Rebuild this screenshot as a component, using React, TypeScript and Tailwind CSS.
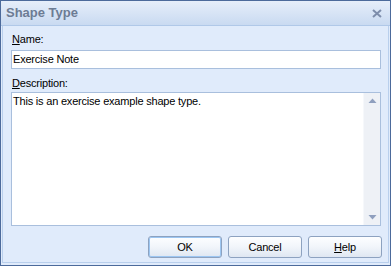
import React from 'react';

const ui = { fontFamily: '"Liberation Sans", Arial, sans-serif' };

function Btn({ children, focused }: { children: React.ReactNode; focused?: boolean }) {
  return (
    <button
      className={
        'w-[74px] h-[22px] rounded-[3px] border border-[#8da2c0] bg-gradient-to-b from-[#fdfeff] via-[#f1f5fa] to-[#dfe7f2] text-[11px] tracking-[-0.2px] text-black flex items-center justify-center ' +
        (focused ? 'shadow-[inset_0_0_0_1px_#9cc6f2]' : '')
      }
    >
      {children}
    </button>
  );
}

export default function App() {
  return (
    <div className="w-[391px] h-[266px] border border-[#4c6a9b] bg-[#e0ebfb] flex flex-col" style={ui}>
      <div className="h-[25px] shrink-0 flex items-center justify-between pl-[5px] pr-[8px] bg-gradient-to-b from-[#e6eefa] to-[#c9daf1] border-b border-[#b0c8e8]">
        <span className="text-[13px] font-bold text-[#6d7c94]">Shape Type</span>
        <svg width="10" height="9" viewBox="0 0 10 9" className="mt-[1px]">
          <path d="M1 1 L9 8 M9 1 L1 8" stroke="#7d8dab" strokeWidth="2" />
        </svg>
      </div>
      <div className="flex-1 flex flex-col pl-[8px] pr-[7px] pt-[7px] border-x border-b border-[#b9cfec] mx-px mb-[2px] text-[11px] tracking-[-0.2px] text-black">
        <div className="h-[13px] leading-[13px] pl-px">
          <span className="underline underline-offset-1">N</span>ame:
        </div>
        <div className="mt-[4px] h-[19px] bg-white border border-[#a9bfdd] flex items-center pl-px">
          Exercise Note
        </div>
        <div className="mt-[8px] h-[13px] leading-[13px] pl-px">
          <span className="underline underline-offset-1">D</span>escription:
        </div>
        <div className="mt-[2px] h-[134px] bg-white border border-[#a9bfdd] flex">
          <div className="flex-1 pl-px pt-[2px] leading-[13px]">This is an exercise example shape type.</div>
          <div className="w-[17px] bg-[#eef1f6] border-l border-[#f6f8fb] flex flex-col justify-between items-center py-[5px]">
            <svg width="9" height="5" viewBox="0 0 9 5">
              <path d="M0.5 5 L4.5 0.5 L8.5 5 Z" fill="#8f9fbe" />
            </svg>
            <svg width="9" height="5" viewBox="0 0 9 5">
              <path d="M0.5 0 L4.5 4.5 L8.5 0 Z" fill="#8f9fbe" />
            </svg>
          </div>
        </div>
        <div className="mt-[10px] -mr-px flex justify-end gap-[6px]">
          <Btn focused>OK</Btn>
          <Btn>Cancel</Btn>
          <Btn>
            <span className="underline underline-offset-1">H</span>elp
          </Btn>
        </div>
      </div>
    </div>
  );
}
